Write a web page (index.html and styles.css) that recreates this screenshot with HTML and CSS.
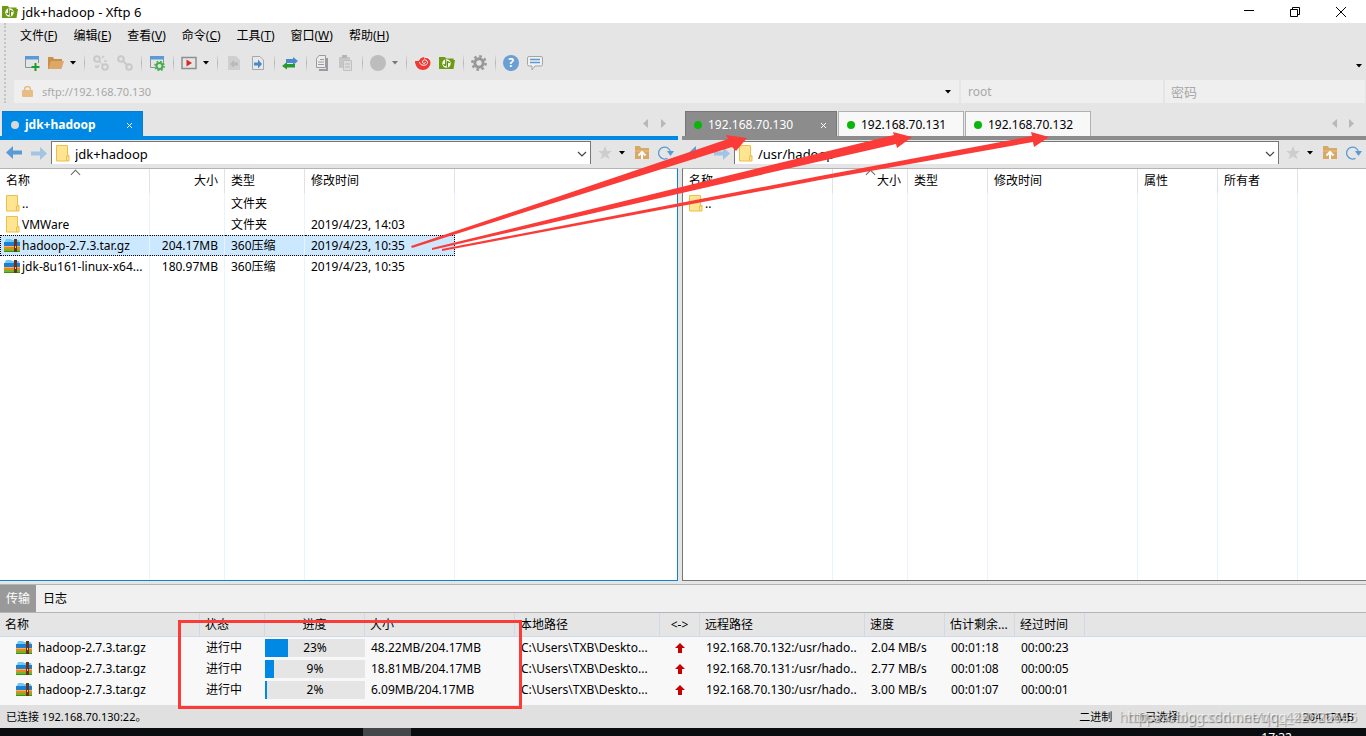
FILE: index.html
```html
<!DOCTYPE html>
<html lang="zh-CN">
<head>
<meta charset="utf-8">
<title>jdk+hadoop - Xftp 6</title>
<link rel="stylesheet" href="styles.css">
</head>
<body>
<svg class="defs" aria-hidden="true">
  <symbol id="caret" viewBox="0 0 6 4"><path d="M0 0h6L3 3.5z" fill="currentColor"/></symbol>
  <symbol id="logo" viewBox="0 0 16 16"><path d="M0 2h6l1 1.500h7.500v1.500H16L14.500 14H0z" fill="#6d9b12"/><circle cx="7.500" cy="8.500" r="4.200" fill="#fff"/><path d="M6.700 4.500v5.500q0 1-1.200 0l-1-1M8.400 12.500V7q0-1 1.200 0l1 1" fill="none" stroke="#5b8a0c" stroke-width="1.200"/></symbol>
  <symbol id="folder" viewBox="0 0 14 17"><path d="M.5.5h11v10h1.500v5.500H.5z" fill="#ffe492" stroke="#e8c04a"/><path d="M10.500 16v-5h2.500" fill="none" stroke="#e8c04a"/></symbol>
  <symbol id="zip" viewBox="0 0 16 15"><path d="M2 1h5l1 1h7l1 4H0z" fill="#6ccaf5"/><path d="M0 4h16v4H0z" fill="#1f7fd4"/><path d="M0 8h16v3H0z" fill="#ee8420"/><path d="M0 8h16v1H0z" fill="#ffb24a"/><path d="M0 11h16v3H0z" fill="#6cb82c"/><path d="M0 13h16v1H0z" fill="#458f12"/><path d="M10 1h3v13h-3z" fill="#6a3218"/><path d="M11 8h1v2h-1z" fill="#f0c090"/></symbol>
  <symbol id="back" viewBox="0 0 16 14"><path d="M7 0v4.500h9v4H7V13L0 6.500z" fill="currentColor"/></symbol>
  <symbol id="star" viewBox="0 0 14 14"><path d="M7 0l2 5h5l-4 3.300 1.500 5L7 10.400 2.500 13.300 4 8.300 0 5h5z" fill="#cdcdcd"/></symbol>
  <symbol id="up" viewBox="0 0 14 13"><path d="M0 0h5l1 2h8v11H0z" fill="#d9a866"/><path d="M0 5h14" stroke="#e6bd84"/><path d="M7 13V6M3.500 9.500L7 6l3.500 3.500" fill="none" stroke="#fff" stroke-width="2"/></symbol>
  <symbol id="reload" viewBox="0 0 16 14"><path d="M9.500 12.300A6 6 0 1 1 12.500 6" fill="none" stroke="#5b9bd5" stroke-width="1.300"/><path d="M9 5h7l-3.500 5z" fill="#5b9bd5"/></symbol>
  <symbol id="gear" viewBox="0 0 16 16"><circle cx="8" cy="8" r="4.200" fill="none" stroke="currentColor" stroke-width="3"/><circle cx="8" cy="8" r="6.700" fill="none" stroke="currentColor" stroke-width="2.400" stroke-dasharray="2.600 2.660"/></symbol>
  <symbol id="tri" viewBox="0 0 5 9"><path d="M5 0v9L0 4.500z" fill="#b8b8b8"/></symbol>
  <symbol id="chev" viewBox="0 0 10 6"><path d="M1 1l4 4 4-4" fill="none" stroke="#444" stroke-width="1.200"/></symbol>
  <symbol id="redup" viewBox="0 0 10 10"><path d="M5 0l5 5H7v5H3V5H0z" fill="#c80000"/></symbol>
  <symbol id="close" viewBox="0 0 7 7"><path d="M1 1l5 5M6 1L1 6" stroke="#fff"/></symbol>
</svg>

<header class="titlebar">
  <svg class="i16"><use href="#logo"/></svg>
  <h1 class="title">jdk+hadoop - Xftp 6</h1>
  <button class="win" aria-label="最小化"><svg width="10" height="10"><path d="M0 3.500h10" stroke="#000"/></svg></button>
  <button class="win" aria-label="还原"><svg width="10" height="10" fill="none" stroke="#000"><path d="M.5 2.500h7v7h-7zM2.500 2.500v-2h7v7h-2"/></svg></button>
  <button class="win" aria-label="关闭"><svg width="10" height="10"><path d="M0 0l10 10M10 0L0 10" stroke="#000"/></svg></button>
</header>

<div class="chrome">
  <nav class="menu">
    <button>文件(<u>F</u>)</button><button>编辑(<u>E</u>)</button><button>查看(<u>V</u>)</button><button>命令(<u>C</u>)</button><button>工具(<u>T</u>)</button><button>窗口(<u>W</u>)</button><button>帮助(<u>H</u>)</button>
  </nav>
  <div class="tools">
    <button aria-label="新建"><svg class="i16" fill="none"><path d="M1.500 3v9.500H9M14.500 3v5" stroke="#8b9298"/><path d="M1 1h14v3.500H1z" fill="#5b9bd5"/><path d="M11.500 8v8M7.500 12h8" stroke="#1f9c2a" stroke-width="2"/></svg></button>
    <button aria-label="打开"><svg class="i16"><path d="M0 2h5l1 2h8v3H3L1 14H0z" fill="#c98f4b"/><path d="M3 6h13l-2.500 8H.5z" fill="#dba868"/></svg></button>
    <button class="drop" aria-label="打开列表"><svg class="caret"><use href="#caret"/></svg></button><i class="sep"></i>
    <button aria-label="断开"><svg class="i16" fill="none" stroke="#c9c9c9" stroke-width="2"><circle cx="4" cy="4" r="2.800"/><circle cx="12" cy="12" r="2.800"/><path d="M6 6l2 2M10 10L8.500 8.500M9 3l2-2M11 6h3M3 10v3M6 10l-2 3" stroke-width="1.500"/></svg></button>
    <button aria-label="重新连接"><svg class="i16" fill="none" stroke="#c9c9c9" stroke-width="2"><circle cx="4" cy="4" r="2.800"/><circle cx="12" cy="12" r="2.800"/><path d="M5 5l6 6"/></svg></button><i class="sep"></i>
    <button aria-label="属性"><svg class="i16" fill="none"><path d="M1.500 3v9.500H6M14.500 3v5" stroke="#8b9298"/><path d="M1 1h14v3.500H1z" fill="#5b9bd5"/><circle cx="10.500" cy="11" r="3" stroke="#45ad4c" stroke-width="2"/><circle cx="10.500" cy="11" r="4.600" stroke="#45ad4c" stroke-width="1.500" stroke-dasharray="1.800 1.810"/></svg></button><i class="sep"></i>
    <button aria-label="运行"><svg class="i16"><path d="M1 2.500h14v11H1z" fill="#e6e6e6" stroke="#8e8e8e" stroke-width="1.500"/><path d="M5.500 4.500v7L11 8z" fill="#e02525"/></svg></button>
    <button class="drop" aria-label="运行列表"><svg class="caret"><use href="#caret"/></svg></button><i class="sep"></i>
    <button aria-label="接收"><svg class="i16"><path d="M2 1h8l4 4v10H2z" fill="#cfcfcf"/><path d="M4 9l4-4v2.500h4v3H8V13z" fill="#b9b9b9"/></svg></button>
    <button aria-label="发送"><svg class="i16"><path d="M2.500 1.500h7.500l3.500 3.500v9.500h-11z" fill="#e8e8e8" stroke="#a3a8ac"/><path d="M12 9L8 4.500v3H4v3h4v3z" fill="#4a88d0"/></svg></button><i class="sep"></i>
    <button aria-label="同步"><svg class="i16"><path d="M4 4h7V2l5 4-5 4V8H4z" fill="#4a88d0"/><path d="M13 9H5V7l-5 4 5 3.500V12.500h8z" fill="#27992e"/></svg></button><i class="sep"></i>
    <button aria-label="复制"><svg class="i16" fill="none" stroke="#989ca0"><path d="M13 3v12H5" stroke-width="2"/><path d="M5 .5h6.500v12h-9V3.500z" fill="#ededed"/><path d="M6 4.500h4M4 7h6M4 9.500h6"/></svg></button>
    <button aria-label="粘贴"><svg class="i16"><path d="M1 2h11v11H1z" fill="#c6c6c6"/><path d="M4 0h5v3H4z" fill="#b5b5b5"/><path d="M5.500 5.500h8v10h-8z" fill="#dcdcdc" stroke="#c0c0c0"/><path d="M7 9h5M7 12h5" stroke="#b8b8b8"/></svg></button><i class="sep"></i>
    <button aria-label="停止"><svg class="i16"><circle cx="8" cy="8" r="8" fill="#bdbdbd"/></svg></button>
    <button class="drop dim" aria-label="停止列表"><svg class="caret"><use href="#caret"/></svg></button><i class="sep"></i>
    <button aria-label="Xshell"><svg class="i16" fill="none"><circle cx="9.500" cy="8" r="6" fill="#ee3a35"/><path d="M0 6h4c0 4 2 6 6 6l3 1c-2 2-5 2.500-8 1.500C1.500 13 0 9 0 6z" fill="#ee3a35"/><path d="M4.500 7c0 4 8 4.500 8 .5 0-3.500-5-3.500-5-.5 0 2 3 1.800 2.800 0M15.500 4.500C14 2.500 11 2 9 3" stroke="#fff" stroke-width="1"/></svg></button>
    <button aria-label="Xftp"><svg class="i16"><use href="#logo"/></svg></button><i class="sep"></i>
    <button class="grey" aria-label="选项"><svg class="i16"><use href="#gear"/></svg></button><i class="sep"></i>
    <button class="help" aria-label="帮助"><span>?</span></button>
    <button aria-label="反馈"><svg class="i16"><path d="M2 1.500h12q1.500 0 1.500 1.500v6.500q0 1.500-1.500 1.500H8l-3 4v-4H2Q.5 11 .5 9.500V3Q.5 1.500 2 1.500z" fill="#f0f0f0" stroke="#a5a5a5"/><path d="M3 4.500h10M3 7.500h10" stroke="#5b9bd5" stroke-width="1.500"/></svg></button>
    <button class="drop more" aria-label="更多"><svg class="caret"><use href="#caret"/></svg></button>
  </div>
  <div class="address">
    <div class="field host"><svg width="11" height="12"><path d="M2.500 5V3.500a3 3 0 0 1 6 0V5" fill="none" stroke="#e4bb84" stroke-width="1.500"/><rect y="4" width="11" height="7" rx="1" fill="#e8bd85"/></svg><input aria-label="主机" value="sftp://192.168.70.130"><button class="drop" aria-label="主机列表"><svg class="caret"><use href="#caret"/></svg></button></div>
    <div class="field user"><input aria-label="用户名" value="root"></div>
    <div class="field pass"><input aria-label="密码" type="password" placeholder="密码"></div>
  </div>
</div>

<main class="panes">
  <section class="pane local">
    <div class="tabs">
      <button class="tab on"><i class="dot"></i><span>jdk+hadoop</span><svg class="x"><use href="#close"/></svg></button>
      <button class="nav" aria-label="上一个"><svg><use href="#tri"/></svg></button><button class="nav next" aria-label="下一个"><svg><use href="#tri"/></svg></button>
    </div>
    <div class="path">
      <button class="arrow" aria-label="后退"><svg><use href="#back"/></svg></button><button class="arrow fwd" aria-label="前进"><svg><use href="#back"/></svg></button>
      <div class="box"><svg class="fold"><use href="#folder"/></svg><input aria-label="本地路径" value="jdk+hadoop"><button aria-label="展开"><svg class="chev"><use href="#chev"/></svg></button></div>
      <button class="act" aria-label="书签"><svg width="14" height="14"><use href="#star"/></svg></button><button class="drop" aria-label="书签列表"><svg class="caret"><use href="#caret"/></svg></button><button class="act" aria-label="上级"><svg width="14" height="13"><use href="#up"/></svg></button><button class="act" aria-label="刷新"><svg width="16" height="14"><use href="#reload"/></svg></button>
    </div>
    <div class="list">
      <table class="files">
        <colgroup><col class="w150"><col class="w75"><col class="w80"><col class="w150"><col></colgroup>
        <thead><tr><th class="sorted">名称</th><th class="num">大小</th><th>类型</th><th>修改时间</th><th></th></tr></thead>
        <tbody>
          <tr><td><div class="name"><svg class="fold"><use href="#folder"/></svg>..</div></td><td></td><td>文件夹</td><td></td><td></td></tr>
          <tr><td><div class="name"><svg class="fold"><use href="#folder"/></svg>VMWare</div></td><td></td><td>文件夹</td><td>2019/4/23, 14:03</td><td></td></tr>
          <tr class="sel"><td><div class="name"><svg class="zip"><use href="#zip"/></svg>hadoop-2.7.3.tar.gz</div></td><td class="num">204.17MB</td><td>360压缩</td><td>2019/4/23, 10:35</td><td></td></tr>
          <tr><td><div class="name"><svg class="zip"><use href="#zip"/></svg>jdk-8u161-linux-x64...</div></td><td class="num">180.97MB</td><td>360压缩</td><td>2019/4/23, 10:35</td><td></td></tr>
          <tr class="fill"><td></td><td></td><td></td><td></td><td></td></tr>
        </tbody>
      </table>
    </div>
  </section>
  <section class="pane remote">
    <div class="tabs">
      <button class="tab on"><i class="dot"></i><span>192.168.70.130</span><svg class="x"><use href="#close"/></svg></button><button class="tab"><i class="dot"></i><span>192.168.70.131</span></button><button class="tab"><i class="dot"></i><span>192.168.70.132</span></button>
      <button class="nav" aria-label="上一个"><svg><use href="#tri"/></svg></button><button class="nav next" aria-label="下一个"><svg><use href="#tri"/></svg></button>
    </div>
    <div class="path">
      <button class="arrow" aria-label="后退"><svg><use href="#back"/></svg></button><button class="arrow fwd" aria-label="前进"><svg><use href="#back"/></svg></button>
      <div class="box"><svg class="fold"><use href="#folder"/></svg><input aria-label="远程路径" value="/usr/hadoop"><button aria-label="展开"><svg class="chev"><use href="#chev"/></svg></button></div>
      <button class="act" aria-label="书签"><svg width="14" height="14"><use href="#star"/></svg></button><button class="drop" aria-label="书签列表"><svg class="caret"><use href="#caret"/></svg></button><button class="act" aria-label="上级"><svg width="14" height="13"><use href="#up"/></svg></button><button class="act" aria-label="刷新"><svg width="16" height="14"><use href="#reload"/></svg></button>
    </div>
    <div class="list">
      <table class="files">
        <colgroup><col class="w150"><col class="w75"><col class="w80"><col class="w150"><col class="w80"><col class="w80"><col></colgroup>
        <thead><tr><th>名称</th><th class="num sorted">大小</th><th>类型</th><th>修改时间</th><th>属性</th><th>所有者</th><th></th></tr></thead>
        <tbody>
          <tr><td><div class="name"><svg class="fold"><use href="#folder"/></svg>..</div></td><td></td><td></td><td></td><td></td><td></td><td></td></tr>
          <tr class="fill"><td></td><td></td><td></td><td></td><td></td><td></td><td></td></tr>
        </tbody>
      </table>
    </div>
  </section>
</main>

<section class="transfers">
  <div class="subtabs"><button class="on">传输</button><button>日志</button></div>
  <table class="queue">
    <colgroup><col class="w200"><col class="w65"><col class="w100"><col class="w150"><col class="w145"><col class="w40"><col class="w165"><col class="w80"><col class="w70"><col class="w70"><col></colgroup>
    <thead><tr><th>名称</th><th>状态</th><th class="mid">进度</th><th>大小</th><th>本地路径</th><th class="mid">&lt;-&gt;</th><th>远程路径</th><th>速度</th><th>估计剩余...</th><th>经过时间</th><th></th></tr></thead>
    <tbody>
      <tr><td><div class="name"><svg class="zip"><use href="#zip"/></svg>hadoop-2.7.3.tar.gz</div></td><td>进行中</td><td class="bar"><div class="meter"><i style="width:23%"></i><b>23%</b></div></td><td>48.22MB/204.17MB</td><td>C:\Users\TXB\Deskto...</td><td class="mid"><svg width="10" height="10"><use href="#redup"/></svg></td><td>192.168.70.132:/usr/hado..</td><td>2.04 MB/s</td><td>00:01:18</td><td>00:00:23</td><td></td></tr>
      <tr><td><div class="name"><svg class="zip"><use href="#zip"/></svg>hadoop-2.7.3.tar.gz</div></td><td>进行中</td><td class="bar"><div class="meter"><i style="width:9%"></i><b>9%</b></div></td><td>18.81MB/204.17MB</td><td>C:\Users\TXB\Deskto...</td><td class="mid"><svg width="10" height="10"><use href="#redup"/></svg></td><td>192.168.70.131:/usr/hado..</td><td>2.77 MB/s</td><td>00:01:08</td><td>00:00:05</td><td></td></tr>
      <tr><td><div class="name"><svg class="zip"><use href="#zip"/></svg>hadoop-2.7.3.tar.gz</div></td><td>进行中</td><td class="bar"><div class="meter"><i style="width:2%"></i><b>2%</b></div></td><td>6.09MB/204.17MB</td><td>C:\Users\TXB\Deskto...</td><td class="mid"><svg width="10" height="10"><use href="#redup"/></svg></td><td>192.168.70.130:/usr/hado..</td><td>3.00 MB/s</td><td>00:01:07</td><td>00:00:01</td><td></td></tr>
    </tbody>
  </table>
</section>

<footer class="status"><span>已连接 192.168.70.130:22。</span><span class="mode">二进制</span><span class="picked">1已选择</span><span>204.17MB</span></footer>
<div class="taskbar"><i></i><time>17:32</time></div>

<svg class="marks" aria-hidden="true" fill="#fb3b38">
  <path d="M411 246L560 196L728 139L726 135L747 138L736 151L732 147L560 201L412 248z"/>
  <path d="M432 248L894 135L893 132L912 137L897 148L896 144L432 250z"/>
  <path d="M442 249L820 176L1032 136L1031 132L1049 137L1034 147L1033 142L820 180L442 251z"/>
  <path d="M179.500 621.500h341v86h-341z" fill="none" stroke="#fb3b38" stroke-width="3"/>
</svg>
<div class="watermark">https://blog.csdn.net/qq_42502645</div>
<div class="watermark second">https://blog.csdn.net/qq_42502645</div>
</body>
</html>
```

FILE: styles.css
```css
* { box-sizing: border-box; }
body { margin: 0; min-height: 100vh; display: flex; flex-direction: column; position: relative; overflow: hidden; background: #e5e5e5; color: #000; font: 12px/20px "Noto Sans", "Noto Sans CJK SC", sans-serif; }
button { border: 0; padding: 0; background: none; color: inherit; font: inherit; display: flex; align-items: center; justify-content: center; }
input { border: 0; padding: 0; background: none; color: inherit; font: inherit; flex: 1; min-width: 0; outline: 0; }
svg { display: block; flex: none; }
.defs { position: absolute; width: 0; height: 0; }
.i16 { width: 16px; height: 16px; }
.caret { width: 6px; height: 4px; }

.titlebar { height: 23px; background: #fff; display: flex; align-items: center; padding-left: 2px; }
.title { flex: 1; margin: 0 0 0 4px; font-size: 13px; font-weight: 400; }
.win { width: 46px; height: 20px; }
.win:last-child { margin-right: 2px; }

.chrome { margin-left: 4px; padding-left: 8px; border-left: 2px dotted #c4c4c4; }
.menu { display: flex; height: 25px; padding-left: 6px; gap: 16px; }
.menu button { white-space: nowrap; }
.tools { display: flex; height: 32px; align-items: center; padding: 0 0 2px 6px; }
.tools button { width: 24px; height: 24px; }
.tools .drop { width: 12px; padding-right: 2px; }
.tools .dim { color: #777; }
.tools .grey { color: #979797; }
.tools .more { margin-left: auto; align-self: flex-end; }
.sep { width: 8px; height: 18px; background: linear-gradient(#e5e5e5, #b5b5b5, #e5e5e5) center / 1px 100% no-repeat; }
.drop + .sep { width: 9px; }
.help span { width: 16px; height: 16px; border-radius: 8px; background: #6b9fd4; color: #fff; font-size: 12px; line-height: 16px; font-weight: 700; }
.address { display: flex; gap: 2px; height: 23px; margin-right: 1px; color: #a8a8a8; }
.field { display: flex; align-items: center; background: #efefef; padding: 0 8px; }
.host { flex: 1; gap: 9px; font-size: 11px; }
.host .drop { width: 6px; color: #000; }
.user { width: 202px; padding-left: 7px; }
.pass { width: 200px; padding-left: 6px; }
.pass input { font-size: 13px; }
.pass input::placeholder { color: #a8a8a8; }

.panes { flex: 1; display: grid; grid-template-columns: 678fr 684fr; gap: 4px; padding-top: 8px; }
.pane { display: flex; flex-direction: column; min-width: 0; --c: #8c8c8c; --edge: #777; --tab: #8c8c8c; }
.local { --c: #0088e5; --edge: #0a84d8; --tab: #0088e5; }
.tabs { display: flex; height: 29px; gap: 2px; padding-left: 2px; border-bottom: 4px solid var(--c); }
.remote .tabs { padding-left: 3px; gap: 1px; }
.tab { width: 126px; border: 1px solid #b0b0b0; border-bottom: 0; background: #f8f8f8; gap: 6px; padding: 2px 0 0 8px; justify-content: flex-start; white-space: nowrap; }
.tab.on { width: 152px; background: var(--tab); color: #fff; border-color: #777; }
.local .tab.on { width: 141px; font-weight: 700; border-color: #0a7dd0; }
.dot { width: 8px; height: 8px; border-radius: 4px; background: #0bb50b; }
.local .dot { background: #d8d8d8; }
.x { width: 7px; height: 7px; margin-left: auto; margin-right: 9px; }
.nav { width: 16px; }
.tab + .nav { margin-left: auto; }
.nav svg { width: 5px; height: 9px; }
.next { margin-right: 7px; }
.next svg, .fwd svg { transform: rotate(180deg); }
.path { display: flex; height: 28px; padding: 1px 0 4px 1px; align-items: center; }
.remote .path { padding-left: 2px; }
.arrow { width: 25px; color: #5b9bd5; }
.arrow svg { width: 16px; height: 14px; }
.fwd { color: #a3c4e2; }
.box { flex: 1; align-self: stretch; display: flex; align-items: center; gap: 5px; padding: 1px 3px 0 4px; background: #fff; border: 1px solid #777; border-bottom: 0; font-size: 13px; min-width: 0; }
.fold { width: 14px; height: 17px; }
.chev { width: 10px; height: 6px; }
.act { width: 24px; }
.path .box + .act { width: 28px; }
.path .drop { width: 6px; margin-right: 5px; }
.list { flex: 1; display: flex; background: #fff; border-top: 1px solid #b4b4b4; border-bottom: 1px solid var(--edge); }
.local .list { border-right: 1px solid var(--edge); }
.remote .list { border-left: 1px solid var(--edge); }

table { width: 100%; table-layout: fixed; border-collapse: separate; border-spacing: 0; }
th, td { padding: 0 6px; text-align: left; font-weight: 400; white-space: nowrap; overflow: hidden; height: 21px; line-height: 19px; }
.name { display: flex; align-items: center; }
.zip { width: 16px; height: 15px; }
.files th { height: 24px; border-right: 1px solid #e2e2e2; padding-bottom: 2px; }
.files td { border-right: 1px solid #eaf2fd; }
.files th:last-child, .files td:last-child { border-right: 0; }
.files .name { gap: 2px; }
.files td:first-child { padding-right: 0; }
.files .zip { margin-left: -2px; }
.files .num { text-align: right; }
.files .fill td { height: auto; }
.sorted { position: relative; }
.sorted::before { content: ""; position: absolute; left: 72px; top: 2px; width: 6px; height: 6px; border: solid #666; border-width: 1px 0 0 1px; transform: rotate(45deg); }
.num.sorted::before { left: 34px; }
.sel td { background: #cce8ff; border-top: 1px dotted #000; border-bottom: 1px dotted #000; }
.sel td:first-child { border-left: 1px dotted #000; padding-left: 5px; }
.sel td:nth-child(4) { border-right: 1px dotted #000; }
.sel td:last-child { background: none; border: 0; }
.w40 { width: 40px; } .w65 { width: 65px; } .w70 { width: 70px; } .w75 { width: 75px; } .w80 { width: 80px; }
.w100 { width: 100px; } .w145 { width: 145px; } .w150 { width: 150px; } .w165 { width: 165px; } .w200 { width: 200px; }

.transfers { margin-top: 3px; border-top: 1px solid #b4b4b4; background: #f8f8f8; padding-bottom: 5px; }
.subtabs { display: flex; height: 28px; background: #f0f0f0; border-bottom: 1px solid #b4b4b4; }
.subtabs button { width: 38px; }
.subtabs .on { width: 36px; background: #999; color: #fff; }
.queue th { height: 24px; background: #e5e5e5; border-right: 1px solid #cfd9ea; border-bottom: 1px solid #cfd9ea; padding: 0 5px; }
.queue th:last-child { border-right: 0; }
.queue td:nth-child(7) { padding-right: 0; }
.queue .name { gap: 6px; padding-left: 10px; }
.queue .mid { text-align: center; }
.mid svg { margin: auto; }
.queue .bar { padding: 0; }
.meter { position: relative; height: 18px; background: #e5e5e5; text-align: center; line-height: 18px; }
.meter i { position: absolute; left: 0; top: 0; height: 18px; background: #0088e5; }
.meter b { position: relative; font-weight: 400; }

.status { height: 23px; background: #e0e0e0; display: flex; align-items: center; padding: 0 12px 0 6px; font-size: 11px; }
.mode { margin-left: auto; }
.picked { margin: 0 124px 0 27px; }
.taskbar { height: 8px; background: #0b0c10; display: flex; overflow: hidden; color: #fff; }
.taskbar i { width: 48px; height: 8px; margin-left: 363px; background: #454648; }
.taskbar time { margin: 0 74px 0 auto; line-height: 20px; }

.marks { position: absolute; left: 0; top: 0; width: 1366px; height: 736px; pointer-events: none; }
.watermark { position: absolute; right: 9px; bottom: 9px; color: #ffffffa0; text-shadow: 1px 1px 1px #00000050; font-size: 14px; }
.second { right: 17px; color: #ffffff60; }
```
